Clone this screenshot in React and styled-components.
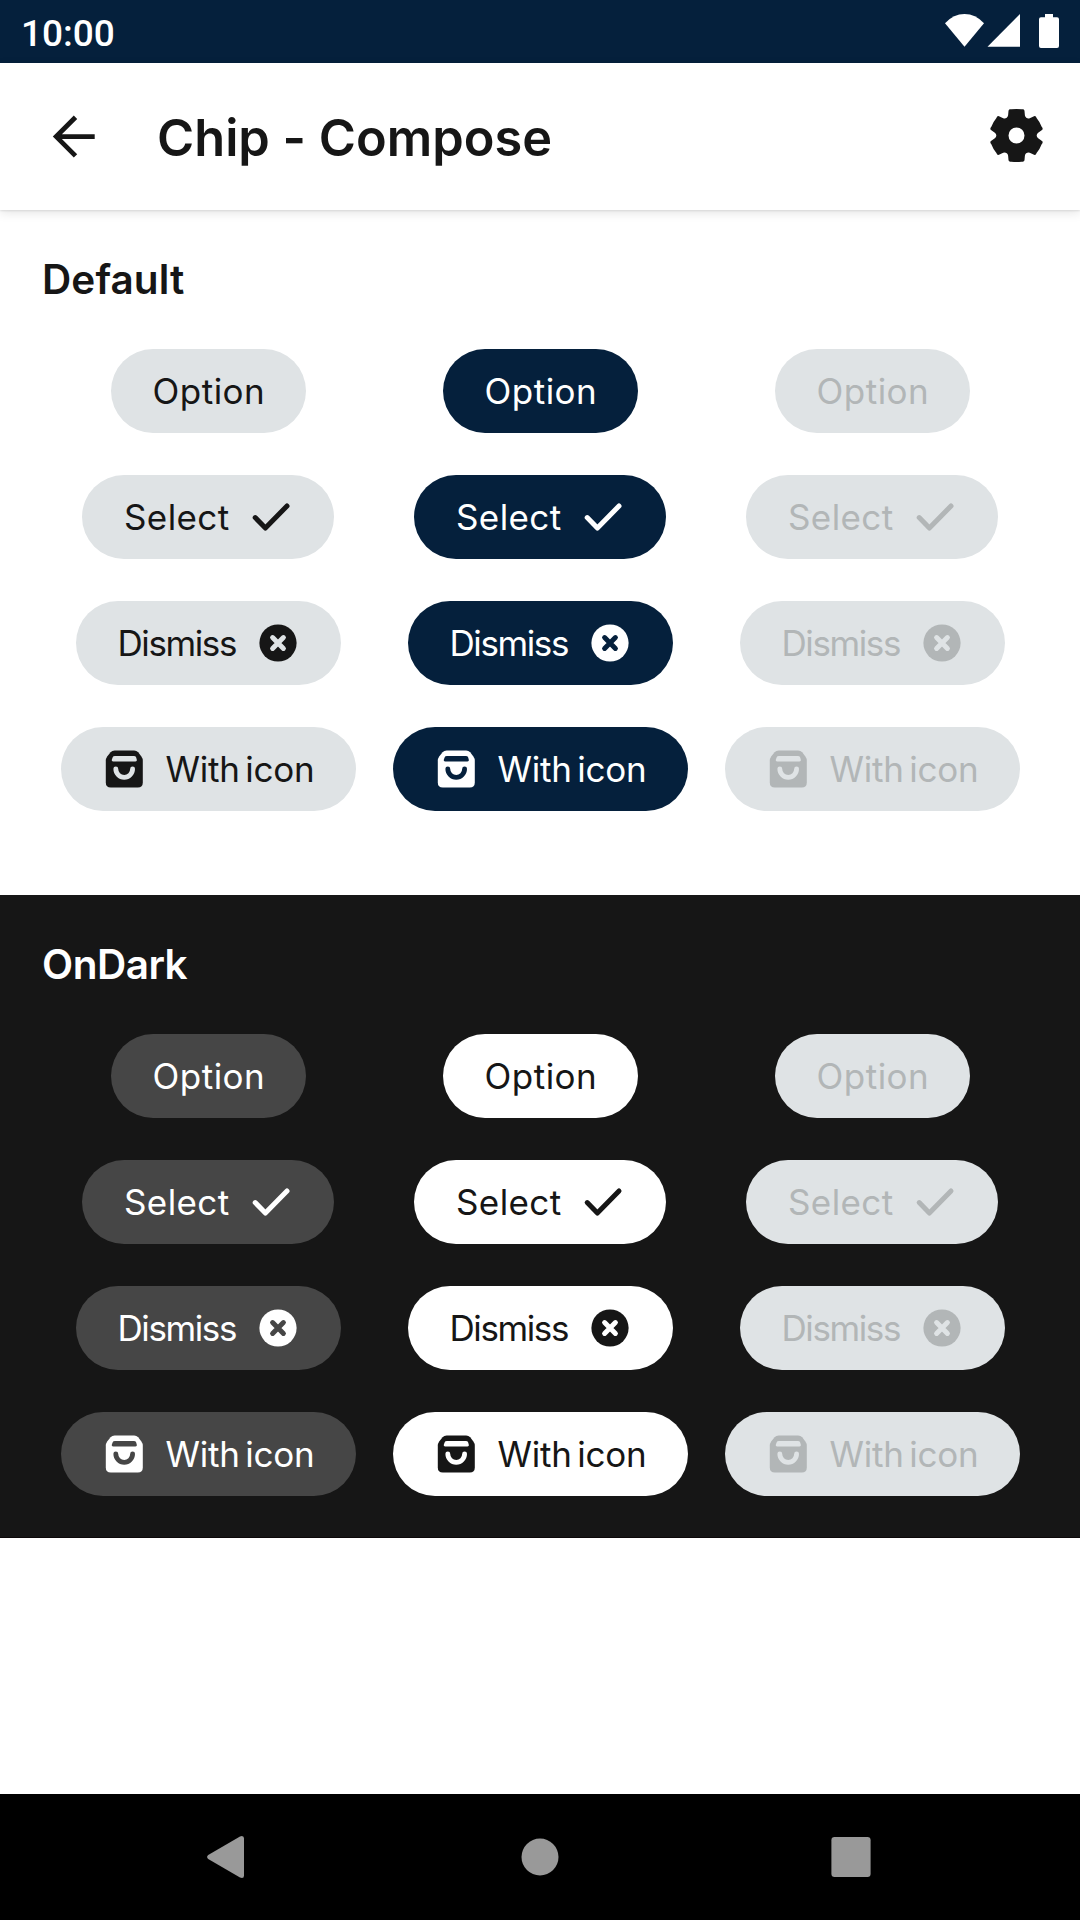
import React from "react";
import styled, { createGlobalStyle } from "styled-components";

const GlobalStyle = createGlobalStyle`
  * { box-sizing: border-box; }
  body { margin: 0; background: #fff; }
  svg { display: block; flex: none; }
`;

const color = {
  navy: "#05203c",
  ink: "#161616",
  mist: "#dfe3e5",
  graphite: "#464646",
  white: "#ffffff",
  disabled: "#b2b6b7",
};

const Screen = styled.div`
  width: 1080px;
  height: 1920px;
  display: flex;
  flex-direction: column;
  background: #fff;
  color: ${color.ink};
  font-family: Inter, "Liberation Sans", sans-serif;
  overflow: hidden;
`;

const StatusBar = styled.header`
  height: 63px;
  flex: none;
  display: flex;
  align-items: flex-start;
  justify-content: space-between;
  padding: 0 21px;
  background: ${color.navy};
  color: #fff;
`;

const Clock = styled.span`
  font: 500 37px/43px Roboto, sans-serif;
  padding-top: 12px;
`;

const StatusIcons = styled.div`
  display: flex;
  padding-top: 14px;
`;

const StatusIcon = styled.svg`
  margin-left: ${(p) => p.$gap || 0}px;
  fill: #fff;
`;

const AppBar = styled.div`
  height: 147px;
  flex: none;
  display: flex;
  align-items: center;
  padding: 0 32px 0 42px;
  background: #fff;
  box-shadow: 0 1px 2px rgba(0, 0, 0, 0.1), 0 3px 10px rgba(0, 0, 0, 0.1);
  z-index: 1;
`;

const Title = styled.h1`
  flex: 1;
  margin: 0 0 0 52px;
  padding-top: 2px;
  font-size: 50.5px;
  line-height: 62px;
  font-weight: 600;
  letter-spacing: 0;
  font-feature-settings: "calt" 0;
  white-space: nowrap;
`;

const Section = styled.section`
  flex: none;
  height: ${(p) => p.$height}px;
  padding: 42px 42px 0;
  background: ${(p) => (p.$dark ? color.ink : color.white)};
  color: ${(p) => (p.$dark ? color.white : color.ink)};
  border-bottom: ${(p) => (p.$dark ? "1px solid #0c0809" : "none")};
`;

const SectionTitle = styled.h2`
  margin: 0;
  height: 55px;
  font-size: 40.5px;
  line-height: 55px;
  font-weight: 600;
  letter-spacing: ${(p) => p.$tracking}px;
`;

const ChipGrid = styled.div`
  display: grid;
  grid-template-columns: repeat(3, 1fr);
  grid-auto-rows: 84px;
  row-gap: 42px;
  justify-items: center;
  margin-top: 42px;
`;

const ChipBox = styled.div`
  width: ${(p) => p.$width}px;
  height: 84px;
  padding: 0 42px;
  display: flex;
  align-items: center;
  gap: 21px;
  border-radius: 42px;
  background: ${(p) => p.$bg};
  color: ${(p) => p.$fg};
`;

const ChipLabel = styled.span`
  flex: 1 0 0;
  min-width: 0;
  font-size: 35px;
  line-height: 42px;
  font-weight: 400;
  letter-spacing: ${(p) => p.$tracking}px;
  word-spacing: -4px;
  white-space: nowrap;
`;

const NavBar = styled.nav`
  height: 126px;
  flex: none;
  margin-top: auto;
  display: grid;
  grid-template-columns: repeat(3, 311px);
  justify-content: center;
  place-items: center;
  background: #000;
`;

const NavIcon = styled.svg`
  fill: #999;
`;

const BackArrow = () => (
  <svg width="63" height="63" viewBox="42 105 63 63" fill="none" stroke={color.ink} strokeWidth="4.8">
    <path d="M75.5 117.2 56.2 136.6 75.5 155.9M56.2 136.6H94.7" />
  </svg>
);

const rotate = ([x, y], deg) => {
  const a = (deg * Math.PI) / 180;
  return `${(x * Math.cos(a) - y * Math.sin(a)).toFixed(2)} ${(x * Math.sin(a) + y * Math.cos(a)).toFixed(2)}`;
};

const gearPath =
  [0, 60, 120, 180, 240, 300]
    .map((deg, i) => {
      const p = (x, y) => rotate([x, y], deg);
      return (
        `${i ? "A90 90 0 0 1 " : "M"}${p(75.5, -26)}` +
        `Q${p(81, -20.5)} ${p(76.5, -16.5)}L${p(65, -8.5)}Q${p(60.5, -5)} ${p(60.5, 0)}` +
        `Q${p(60.5, 5)} ${p(65, 8.5)}L${p(76.5, 16.5)}Q${p(81, 20.5)} ${p(75.5, 26)}`
      );
    })
    .join("") + "A90 90 0 0 1 " + rotate([75.5, -26], 0) + "Z";

const Gear = () => (
  <svg width="63" height="63" viewBox="-94.5 -91.5 189 189">
    <path fill={color.ink} fillRule="evenodd" d={gearPath + "M24 0A24 24 0 1 0-24 0 24 24 0 1 0 24 0Z"} />
  </svg>
);

const CheckIcon = () => (
  <svg width="42" height="42" viewBox="0 0 42 42" fill="none" stroke="currentColor" strokeWidth="5" strokeLinecap="round" strokeLinejoin="round">
    <path d="M5.2 21.6 15.4 32 37 10" />
  </svg>
);

const DismissIcon = ({ bg }) => (
  <svg width="42" height="42" viewBox="0 0 42 42">
    <circle cx="21" cy="21" r="18.6" fill="currentColor" />
    <path d="M15.6 15.6 26.4 26.4M26.4 15.6 15.6 26.4" stroke={bg} strokeWidth="5" strokeLinecap="round" />
  </svg>
);

const BagIcon = ({ bg }) => (
  <svg width="42" height="42" viewBox="-.4 0 42 42">
    <path
      fill="currentColor"
      d="M11.2 2.4H30.8Q33.2 2.4 34.8 4.2L38 8.4Q39.4 10.3 39.4 12.8V34.6Q39.4 39.6 34.4 39.6H7.4Q2.4 39.6 2.4 34.6V12.8Q2.4 10.3 3.8 8.4L7.2 4.2Q8.8 2.4 11.2 2.4Z"
    />
    <path fill={bg} d="M11.6 8H30.4Q32.3 8 32.8 9.4L33.4 11.8Q33.9 13.6 32 13.6H9.8Q7.9 13.6 8.4 11.8L9.2 9.4Q9.7 8 11.6 8Z" />
    <path fill="none" stroke={bg} strokeWidth="4.8" strokeLinecap="round" d="M12.4 20.8A8.4 8.6 0 0 0 29.2 20.8" />
  </svg>
);

const chips = [
  { label: "Option", width: 195, tracking: 0.5 },
  { label: "Select", width: 252, tracking: 0.4, Trailing: CheckIcon },
  { label: "Dismiss", width: 265, tracking: -1.4, Trailing: DismissIcon },
  { label: "With icon", width: 295, tracking: -0.25, Leading: BagIcon },
];

const defaultStyles = [
  { bg: color.mist, fg: color.ink },
  { bg: color.navy, fg: color.white },
  { bg: color.mist, fg: color.disabled },
];

const darkStyles = [
  { bg: color.graphite, fg: color.white },
  { bg: color.white, fg: color.ink },
  { bg: color.mist, fg: color.disabled },
];

const Chip = ({ label, width, tracking, Leading, Trailing, bg, fg }) => (
  <ChipBox $width={width} $bg={bg} $fg={fg}>
    {Leading && <Leading bg={bg} />}
    <ChipLabel $tracking={tracking}>{label}</ChipLabel>
    {Trailing && <Trailing bg={bg} />}
  </ChipBox>
);

const ChipSection = ({ title, tracking, height, dark, variants }) => (
  <Section $height={height} $dark={dark}>
    <SectionTitle $tracking={tracking}>{title}</SectionTitle>
    <ChipGrid>
      {chips.map((chip) => variants.map((v, i) => <Chip key={chip.label + i} {...chip} {...v} />))}
    </ChipGrid>
  </Section>
);

export default function App() {
  return (
    <Screen>
      <GlobalStyle />
      <StatusBar>
        <Clock>10:00</Clock>
        <StatusIcons>
          <StatusIcon width="39" height="34" viewBox="0 0 39 34">
            <path d="M0 9.2Q8.5 0 19.5 0T39 9.2L19.5 32.8Z" />
          </StatusIcon>
          <StatusIcon $gap={3} width="33" height="34" viewBox="0 0 33 34">
            <path d="M33 0V32.8H.5Z" />
          </StatusIcon>
          <StatusIcon $gap={19} width="20" height="34" viewBox="0 0 20 34">
            <path d="M6 0H14V3.2H18Q20 3.2 20 5.2V32Q20 34 18 34H2Q0 34 0 32V5.2Q0 3.2 2 3.2H6Z" />
          </StatusIcon>
        </StatusIcons>
      </StatusBar>
      <AppBar>
        <BackArrow />
        <Title>Chip - Compose</Title>
        <Gear />
      </AppBar>
      <ChipSection title="Default" tracking={0.1} height={685} variants={defaultStyles} />
      <ChipSection title="OnDark" tracking={-0.5} height={643} dark variants={darkStyles} />
      <NavBar>
        <NavIcon width="44" height="44" viewBox="0 0 44 44">
          <path d="M1.2 20 33 1.4Q37 0 37 3.6V40.4Q37 44 33 42.6L1.2 24Q-1 22 1.2 20Z" />
        </NavIcon>
        <NavIcon width="38" height="38" viewBox="0 0 38 38">
          <circle cx="19" cy="19" r="18.5" />
        </NavIcon>
        <NavIcon width="40" height="40" viewBox="0 0 40 40">
          <rect x=".4" width="39.2" height="40" rx="3.2" />
        </NavIcon>
      </NavBar>
    </Screen>
  );
}
